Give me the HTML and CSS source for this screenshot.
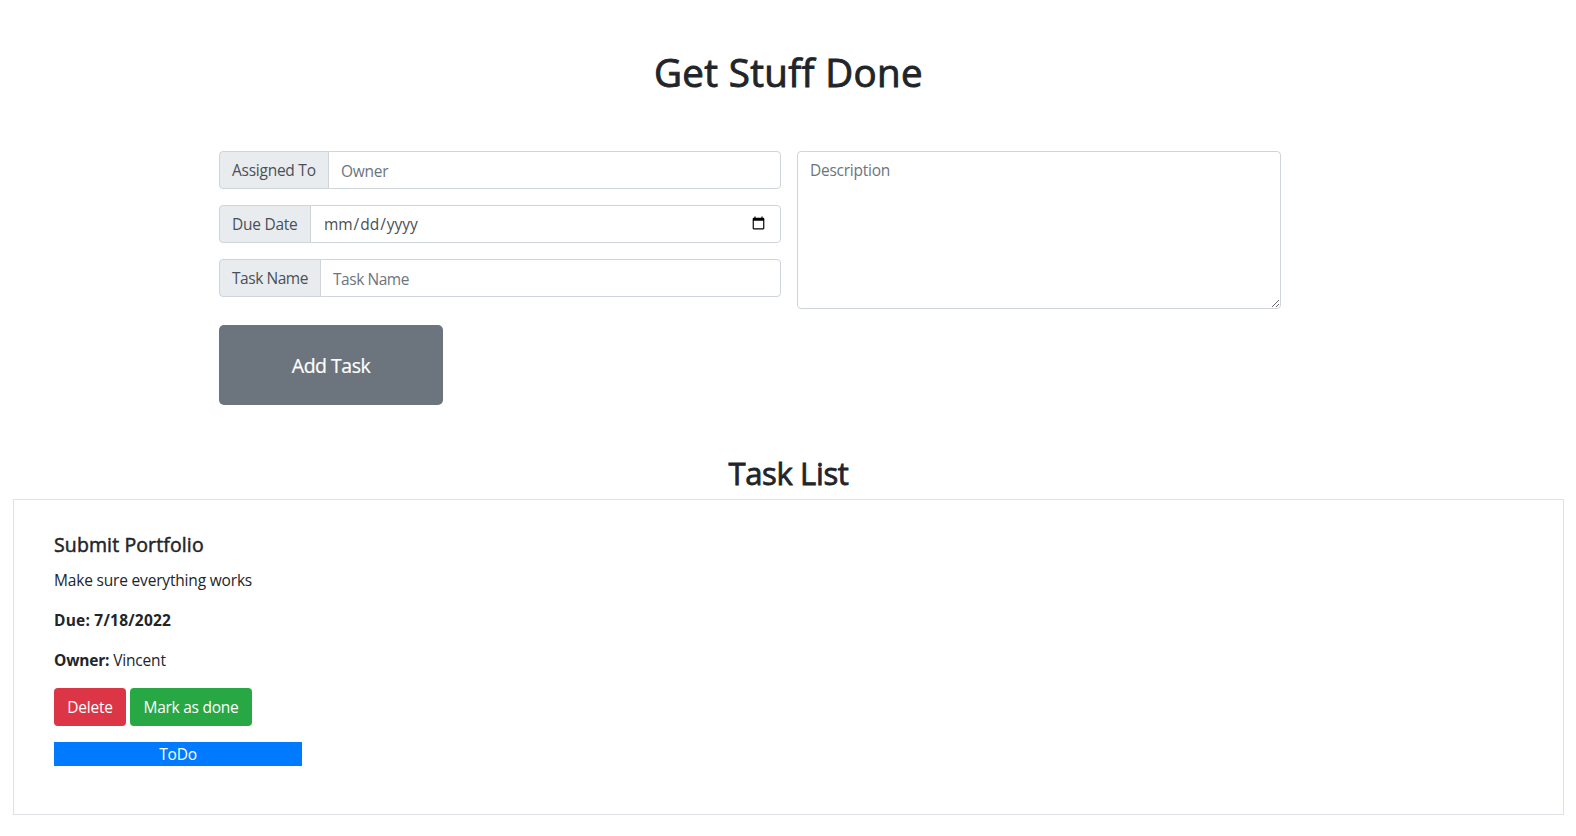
FILE: index.html
```html
<!DOCTYPE html>
<html lang="en">
<head>
<meta charset="utf-8">
<title>Get Stuff Done</title>
<link rel="stylesheet" href="styles.css">
</head>
<body>
<h1 class="page-title">Get Stuff Done</h1>
<form class="task-form">
  <div class="fields">
    <div class="input-group"><label class="addon addon-owner" for="owner">Assigned To</label><input class="control" id="owner" type="text" placeholder="Owner"></div>
    <div class="input-group"><label class="addon addon-date" for="due">Due Date</label><input class="control control-date" id="due" type="date"></div>
    <div class="input-group"><label class="addon addon-name" for="name">Task Name</label><input class="control control-name" id="name" type="text" placeholder="Task Name"></div>
  </div>
  <textarea class="description" placeholder="Description"></textarea>
  <button class="btn btn-add" type="button">Add Task</button>
</form>
<h2 class="list-title">Task List</h2>
<section class="task-card">
  <h5 class="task-name">Submit Portfolio</h5>
  <p class="task-text">Make sure everything works</p>
  <p class="task-text task-due"><b>Due: 7/18/2022</b></p>
  <p class="task-text task-owner"><b>Owner:</b> Vincent</p>
  <div class="actions"><button class="btn btn-delete" type="button">Delete</button><button class="btn btn-done" type="button">Mark as done</button></div>
  <div class="status">ToDo</div>
</section>
</body>
</html>
```
FILE: styles.css
```css
* { box-sizing: border-box; }
body {
  margin: 0;
  padding: 48px 12px 0 13px;
  background: #fff;
  color: #212529;
  font-family: "Open Sans", "Noto Sans", sans-serif;
  font-size: 15.5px;
  line-height: 24px;
  letter-spacing: -0.25px;
}
h1, h2, h5, p { margin: 0; font-weight: 500; }
.page-title { height: 48px; font-size: 38.5px; line-height: 48px; text-align: center; letter-spacing: 0.35px; -webkit-text-stroke: 0.9px; }
.task-form {
  display: grid;
  grid-template-columns: 562px 484px;
  gap: 16px;
  margin: 55px 0 0 206px;
}
.fields { display: flex; flex-direction: column; gap: 16px; }
.input-group { display: flex; height: 38px; }
.addon {
  flex: none;
  padding: 6px 0 0 12px;
  border: 1px solid #ced4da;
  border-radius: 4px 0 0 4px;
  background: #e9ecef;
  color: #495057;
  white-space: nowrap;
}
.addon-owner { width: 110px; }
.addon-date { width: 92px; }
.addon-name { width: 102px; letter-spacing: -0.45px; }
.control, .description {
  border: 1px solid #ced4da;
  background: #fff;
  color: #495057;
  font: inherit;
  letter-spacing: inherit;
  outline: 0;
}
.control { flex: 1; min-width: 0; margin-left: -1px; padding: 7px 12px 5px; border-radius: 0 4px 4px 0; }
.control-date { padding: 6px 12px; letter-spacing: -0.05px; }
.control-name { letter-spacing: -0.45px; }
.control::placeholder, .description::placeholder { color: #6c757d; opacity: 1; }
.description { display: block; width: 484px; height: 158px; padding: 6px 12px; border-radius: 4px; resize: both; }
.btn { border: 0; border-radius: 4px; padding: 0 0 1px; color: #fff; font: inherit; letter-spacing: inherit; white-space: nowrap; }
.btn-add { width: 224px; height: 80px; padding: 1px 0 0; border-radius: 5px; background: #6c757d; font-size: 19.5px; letter-spacing: -0.5px; -webkit-text-stroke: 0.2px; }
.list-title { margin-top: 48px; height: 46px; padding-top: 1px; font-size: 31px; line-height: 38px; text-align: center; letter-spacing: -0.35px; -webkit-text-stroke: 0.8px; }
.task-card { height: 316px; padding: 33px 40px 0; border: 1px solid #dee2e6; }
.task-name { height: 35px; font-size: 19.5px; line-height: 24px; letter-spacing: 0.12px; -webkit-text-stroke: 0.5px; }
.task-text { height: 40px; font-weight: 400; letter-spacing: -0.18px; }
.task-due { letter-spacing: 0.22px; }
.actions { display: flex; gap: 4px; }
.btn-delete, .btn-done { height: 38px; }
.btn-delete { width: 72px; background: #dc3545; }
.btn-done { width: 122px; background: #28a745; }
.status { width: 248px; height: 24px; margin-top: 16px; background: #007bff; color: #fff; text-align: center; }
```
